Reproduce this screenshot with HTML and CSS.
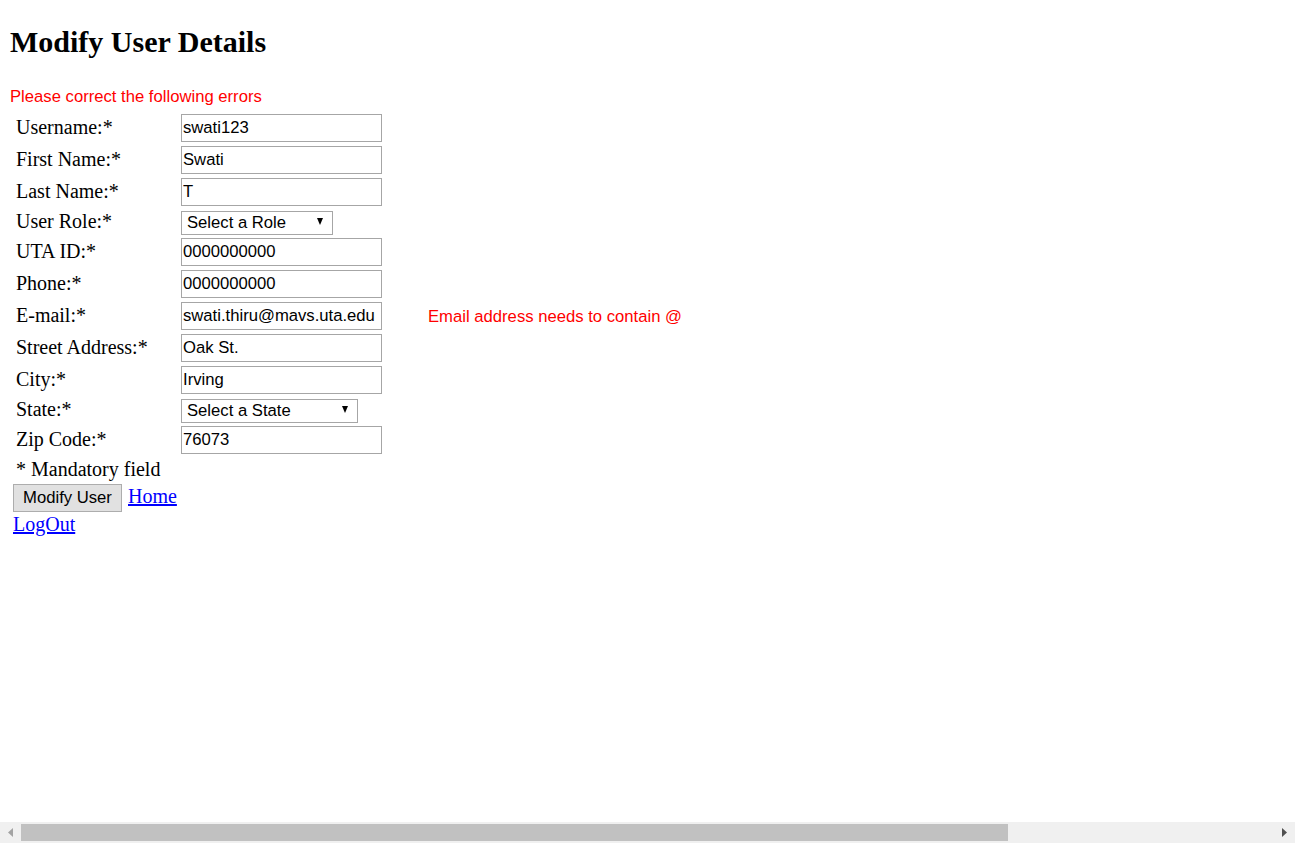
FILE: index.html
```html
<!DOCTYPE html>
<html lang="en">
<head>
<meta charset="utf-8">
<title>Modify User Details</title>
<link rel="stylesheet" href="styles.css">
</head>
<body>
<h2 class="title">Modify User Details</h2>
<div class="errors">Please correct the following errors</div>
<form class="user-form" action="#">
  <div class="grid">
    <label class="lbl">Username:*</label>
    <input class="field" type="text" value="swati123">
    <span class="msg"></span>

    <label class="lbl">First Name:*</label>
    <input class="field" type="text" value="Swati">
    <span class="msg"></span>

    <label class="lbl">Last Name:*</label>
    <input class="field" type="text" value="T">
    <span class="msg"></span>

    <label class="lbl">User Role:*</label>
    <span class="select-wrap role"><select class="sel"><option>Select a Role</option></select></span>
    <span class="msg"></span>

    <label class="lbl">UTA ID:*</label>
    <input class="field" type="text" value="0000000000">
    <span class="msg"></span>

    <label class="lbl">Phone:*</label>
    <input class="field" type="text" value="0000000000">
    <span class="msg"></span>

    <label class="lbl">E-mail:*</label>
    <input class="field" type="text" value="swati.thiru@mavs.uta.edu">
    <span class="msg">Email address needs to contain @</span>

    <label class="lbl">Street Address:*</label>
    <input class="field" type="text" value="Oak St.">
    <span class="msg"></span>

    <label class="lbl">City:*</label>
    <input class="field" type="text" value="Irving">
    <span class="msg"></span>

    <label class="lbl">State:*</label>
    <span class="select-wrap state"><select class="sel"><option>Select a State</option></select></span>
    <span class="msg"></span>

    <label class="lbl">Zip Code:*</label>
    <input class="field" type="text" value="76073">
    <span class="msg"></span>

    <div class="note">* Mandatory field</div>
  </div>
  <div class="actions">
    <button class="btn" type="button">Modify User</button>
    <a class="link" href="#">Home</a>
  </div>
  <a class="link logout" href="#">LogOut</a>
</form>

<div class="hscroll" aria-hidden="true">
  <span class="arrow left"><svg width="5" height="9" viewBox="0 0 5 9"><path d="M5 0 L0 4.5 L5 9 Z" fill="#a3a3a3"/></svg></span>
  <span class="thumb"></span>
  <span class="track-rest"></span>
  <span class="arrow right"><svg width="5" height="9" viewBox="0 0 5 9"><path d="M0 0 L5 4.5 L0 9 Z" fill="#505050"/></svg></span>
</div>
</body>
</html>
```

FILE: styles.css
```css
html, body {
  background: #ffffff;
}

body {
  margin: 0;
  padding: 10px;
  font-family: "Liberation Serif", "Times New Roman", serif;
  font-size: 20px;
  color: #000000;
  overflow: hidden;
}

.title {
  font-family: "Liberation Serif", "Times New Roman", serif;
  font-weight: bold;
  font-size: 30px;
  margin: 15px 0 28px 0;
}

.errors {
  font-family: "Liberation Sans", Arial, sans-serif;
  font-size: 16.67px;
  color: #ff0000;
}

.user-form {
  margin: 7px 0 0 0;
}

.grid {
  display: grid;
  grid-template-columns: 165px 201px auto;
  row-gap: 4px;
  align-items: center;
  margin-left: 6px;
  width: max-content;
}

.lbl {
  font-size: 20px;
  line-height: 21px;
  padding-bottom: 2px;
}

.field {
  box-sizing: border-box;
  width: 201px;
  height: 28px;
  margin: 0;
  padding: 0 1px;
  border: 1px solid #a6a6a6;
  background: #ffffff;
  font-family: "Liberation Sans", Arial, sans-serif;
  font-size: 16.67px;
  color: #000000;
  outline: none;
}

.select-wrap {
  position: relative;
  display: block;
  height: 24px;
}

.select-wrap.role { width: 152px; }
.select-wrap.state { width: 177px; }

.sel {
  box-sizing: border-box;
  appearance: none;
  -webkit-appearance: none;
  width: 100%;
  height: 24px;
  margin: 0;
  padding: 0 0 0 5px;
  border: 1px solid #a6a6a6;
  border-radius: 0;
  background: #ffffff;
  font-family: "Liberation Sans", Arial, sans-serif;
  font-size: 16.67px;
  color: #000000;
  outline: none;
}

.select-wrap::after {
  content: "";
  position: absolute;
  right: 10px;
  top: 8px;
  width: 0;
  height: 0;
  border-left: 3.5px solid transparent;
  border-right: 3.5px solid transparent;
  border-top: 7px solid #000000;
  pointer-events: none;
}

.msg {
  padding-left: 46px;
  padding-top: 1px;
  font-family: "Liberation Sans", Arial, sans-serif;
  font-size: 16.67px;
  color: #ff0000;
  white-space: nowrap;
}

.note {
  grid-column: 1 / 4;
  font-size: 20px;
  line-height: 22px;
  margin: 0 0 1px 0;
}

.actions {
  display: flex;
  align-items: baseline;
  gap: 6px;
  margin: 3px 0 0 3px;
}

.btn {
  box-sizing: border-box;
  width: 109px;
  height: 28px;
  margin: 0;
  padding: 0;
  border: 1px solid #adadad;
  border-radius: 0;
  background: #e1e1e1;
  font-family: "Liberation Sans", Arial, sans-serif;
  font-size: 16.67px;
  color: #000000;
}

.link {
  font-size: 20px;
  line-height: 23px;
  color: #0000ff;
  text-decoration: underline;
}

.logout {
  display: inline-block;
  margin-left: 3px;
  line-height: 25px;
}

.hscroll {
  position: fixed;
  left: 0;
  right: 0;
  bottom: 0;
  height: 21px;
  display: flex;
  align-items: center;
  background: #f0f0f0;
}

.arrow {
  width: 21px;
  height: 21px;
  display: flex;
  align-items: center;
  justify-content: flex-start;
  padding-left: 8px;
  box-sizing: border-box;
}

.thumb {
  width: 987px;
  height: 17px;
  background: #c1c1c1;
}

.track-rest {
  flex: 1;
}
```
